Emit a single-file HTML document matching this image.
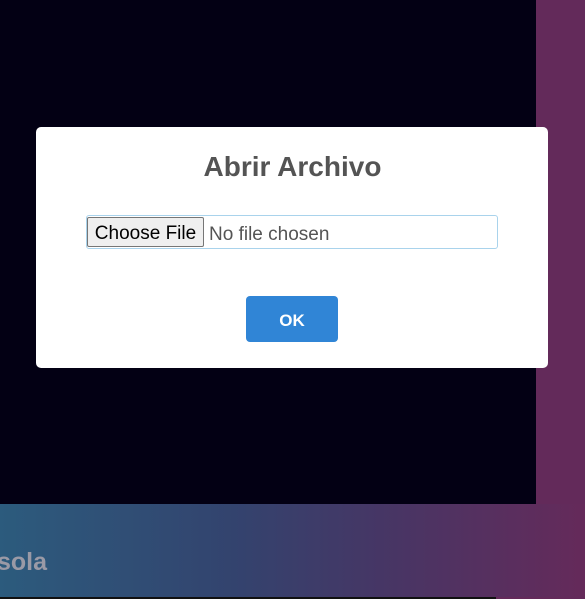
<!DOCTYPE html>
<html><head><meta charset="utf-8"><style>
html,body{margin:0;padding:0;width:585px;height:599px;overflow:hidden;background:#632a5a;font-family:"Liberation Sans",sans-serif}
.dark{position:absolute;left:0;top:0;width:536px;height:504px;background:#030014}
.band{position:absolute;left:0;top:504px;width:585px;height:93px;background:linear-gradient(90deg,#2c5b7d 0%,#33436e 40%,#463665 65%,#652a5a 100%)}
.line{position:absolute;left:0;top:597px;width:496px;height:2px;background:#111}
.sola{position:absolute;left:-3px;top:548px;font-size:25px;font-weight:bold;color:#9a9aa6}
.modal{position:absolute;left:36px;top:127px;width:512px;height:241px;background:#fff;border-radius:5px}
.title{position:absolute;left:0;right:0;top:151px;text-align:center;font-size:28px;font-weight:bold;color:#545454}
.file{position:absolute;left:86px;top:215px;width:410px;height:32px;border:1px solid #a9d3ec;border-radius:3px;background:#fff}
.btnf{position:absolute;left:0;top:1px;width:117px;height:30px;box-sizing:border-box;background:#efefef;border:1px solid #767676;border-radius:2px;font-size:19px;color:#000;line-height:31px;text-align:center}
.nf{position:absolute;left:122px;top:4px;font-size:19px;color:#545454;line-height:30px}
.ok{position:absolute;left:246px;top:296px;width:92px;height:46px;background:#3085d6;border-radius:4px;color:#fff;font-weight:bold;font-size:17px;text-align:center;line-height:50px}
</style></head><body>
<div class="dark"></div>
<div class="band"></div>
<div class="sola">sola</div>
<div class="line"></div>
<div class="modal"></div>
<div class="title">Abrir Archivo</div>
<div class="file"><div class="btnf">Choose File</div><div class="nf">No file chosen</div></div>
<div class="ok">OK</div>
</body></html>
